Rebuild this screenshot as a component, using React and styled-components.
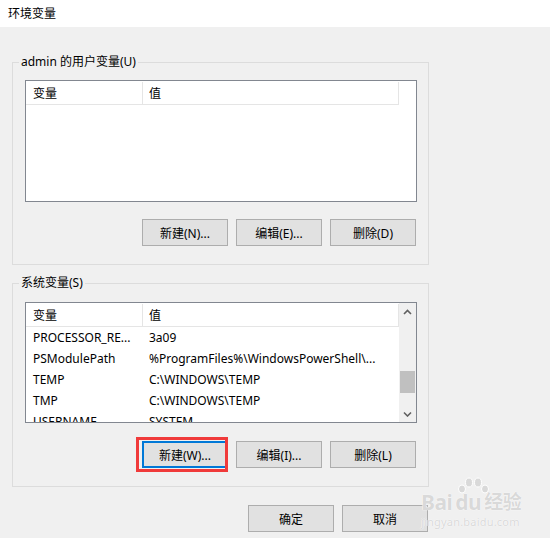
import React from 'react'
import styled, { createGlobalStyle } from 'styled-components'

const GlobalStyle = createGlobalStyle`
  html, body {
    margin: 0;
    padding: 0;
    background: #f0f0f0;
  }
  body {
    font-family: "Noto Sans", "Noto Sans CJK SC", sans-serif;
    font-size: 12px;
    color: #000;
  }
`

const Window = styled.div`
  position: relative;
  width: 550px;
  height: 538px;
  overflow: hidden;
  background: #f0f0f0;
`

const TitleBar = styled.div`
  height: 27px;
  background: #fff;
  display: flex;
  align-items: center;
  padding-left: 8px;
  padding-bottom: 2px;
  box-sizing: border-box;
  font-size: 12px;
`

const Body = styled.div`
  width: 417px;
  padding: 27px 0 0 12px;
`

const Group = styled.fieldset`
  margin: ${(p) => p.$mt || 0}px 0 0;
  padding: ${(p) => p.$pt || 10}px 11px 18px 12px;
  border: 1px solid #dcdcdc;
  min-width: 0;
  width: 417px;
  box-sizing: border-box;
`

const Legend = styled.legend`
  margin-left: -6px;
  padding: 0 2px;
  line-height: 16px;
  font-size: 12px;
`

const ListBox = styled.div`
  width: 392px;
  height: ${(p) => p.$h}px;
  border: 1px solid #828790;
  background: #fff;
  display: flex;
  box-sizing: border-box;
`

const Pane = styled.div`
  flex: 1;
  min-width: 0;
  overflow: hidden;
  display: flex;
  flex-direction: column;
`

const Header = styled.div`
  display: flex;
  flex-shrink: 0;
  width: 373px;
  height: 24px;
  border-bottom: 1px solid #e5e5e5;
  box-sizing: border-box;
`

const HeaderCell = styled.div`
  display: flex;
  align-items: center;
  ${(p) => (p.$w ? `width: ${p.$w}px;` : 'flex: 1;')}
  padding-left: ${(p) => p.$pl}px;
  margin-top: 1px;
  border-right: 1px solid #e5e5e5;
  box-sizing: border-box;
`

const Row = styled.div`
  display: flex;
  align-items: center;
  flex-shrink: 0;
  height: 21px;
`

const Cell = styled.div`
  ${(p) => (p.$w ? `width: ${p.$w}px;` : 'flex: 1;')}
  padding-left: ${(p) => p.$pl}px;
  white-space: nowrap;
  overflow: hidden;
  box-sizing: border-box;
`

const Scrollbar = styled.div`
  width: 17px;
  flex-shrink: 0;
  background: #f0f0f0;
  display: flex;
  flex-direction: column;
`

const ScrollArrow = styled.div`
  height: 17px;
  display: flex;
  align-items: center;
  justify-content: center;
  flex-shrink: 0;
`

const Track = styled.div`
  flex: 1;
`

const Thumb = styled.div`
  margin: ${(p) => p.$offset}px 1px 0 1px;
  height: 22px;
  background: #c0c0c0;
`

const ButtonRow = styled.div`
  display: flex;
  justify-content: flex-end;
  gap: 8px;
  margin-top: ${(p) => p.$mt}px;
  padding-right: 1px;
`

const Button = styled.button`
  position: relative;
  width: 86px;
  height: 27px;
  padding: 0;
  box-sizing: border-box;
  background: #e1e1e1;
  border: ${(p) => (p.$focused ? '2px solid #0078d7' : '1px solid #adadad')};
  color: #000;
  font-family: inherit;
  font-size: 12px;
`

const Highlight = styled.span`
  position: absolute;
  left: -8px;
  top: -6px;
  right: -2px;
  bottom: -6px;
  border: 3px solid #f03a3a;
  pointer-events: none;
`

const Watermark = styled.div`
  position: absolute;
  left: 421px;
  top: 477px;
  color: #d9d9d9;
  white-space: nowrap;
  text-shadow: 0 0 1px #fff, 0 0 1px #fff;
  pointer-events: none;
`

const MarkLogo = styled.div`
  position: relative;
  display: flex;
  align-items: flex-end;
  gap: 3px;
  height: 35px;
  font-size: 21px;
  font-weight: bold;
  line-height: 20px;
  letter-spacing: -0.5px;
`

const MarkWord = styled.span`
  font-size: ${(p) => p.$size || 21}px;
`

const Paw = styled.svg`
  position: absolute;
  left: 36px;
  top: 0;
`

const MarkSub = styled.div`
  font-size: 11px;
  line-height: 14px;
  margin-top: 3px;
  letter-spacing: 0.2px;
`

const Chevron = ({ down }) => (
  <svg width="9" height="6" viewBox="0 0 9 6">
    <polyline
      points={down ? '1,1.5 4.5,5 8,1.5' : '1,5 4.5,1.5 8,5'}
      fill="none"
      stroke="#606060"
      strokeWidth="1.6"
    />
  </svg>
)

const systemVars = [
  ['PROCESSOR_RE...', '3a09'],
  ['PSModulePath', '%ProgramFiles%\\WindowsPowerShell\\...'],
  ['TEMP', 'C:\\WINDOWS\\TEMP'],
  ['TMP', 'C:\\WINDOWS\\TEMP'],
  ['USERNAME', 'SYSTEM'],
]

const ListHeader = () => (
  <Header>
    <HeaderCell $w={117} $pl={7}>变量</HeaderCell>
    <HeaderCell $pl={6}>值</HeaderCell>
  </Header>
)

const App = () => (
  <Window>
    <GlobalStyle />
    <TitleBar>环境变量</TitleBar>
    <Body>
      <Group>
        <Legend>admin 的用户变量(U)</Legend>
        <ListBox $h={122}>
          <Pane>
            <ListHeader />
          </Pane>
        </ListBox>
        <ButtonRow $mt={17}>
          <Button>新建(N)...</Button>
          <Button>编辑(E)...</Button>
          <Button>删除(D)</Button>
        </ButtonRow>
      </Group>

      <Group $mt={10} $pt={11}>
        <Legend>系统变量(S)</Legend>
        <ListBox $h={121}>
          <Pane>
            <ListHeader />
            {systemVars.map(([name, value]) => (
              <Row key={name}>
                <Cell $w={117} $pl={7}>{name}</Cell>
                <Cell $pl={6}>{value}</Cell>
              </Row>
            ))}
          </Pane>
          <Scrollbar>
            <ScrollArrow><Chevron /></ScrollArrow>
            <Track>
              <Thumb $offset={51} />
            </Track>
            <ScrollArrow><Chevron down /></ScrollArrow>
          </Scrollbar>
        </ListBox>
        <ButtonRow $mt={18}>
          <Button $focused>
            新建(W)...
            <Highlight />
          </Button>
          <Button>编辑(I)...</Button>
          <Button>删除(L)</Button>
        </ButtonRow>
      </Group>

      <ButtonRow $mt={18}>
        <Button>确定</Button>
        <Button>取消</Button>
      </ButtonRow>
    </Body>

    <Watermark>
      <MarkLogo>
        <Paw width="34" height="18" viewBox="0 0 34 18">
          <g fill="#d9d9d9" stroke="#fff" strokeWidth="1">
            <ellipse cx="5" cy="12" rx="3.5" ry="4" />
            <ellipse cx="12" cy="5.5" rx="3.5" ry="4.5" />
            <ellipse cx="21" cy="5.5" rx="3.5" ry="4.5" />
            <ellipse cx="28" cy="12" rx="3.5" ry="4" />
          </g>
        </Paw>
        <MarkWord>Bai</MarkWord>
        <MarkWord>du</MarkWord>
        <MarkWord $size={19}>经验</MarkWord>
      </MarkLogo>
      <MarkSub>jingyan.baidu.com</MarkSub>
    </Watermark>
  </Window>
)

export default App
